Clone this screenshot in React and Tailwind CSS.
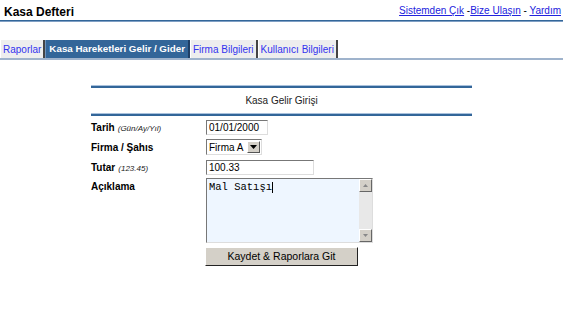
import React from 'react';

const font = { fontFamily: '"Liberation Sans", Arial, sans-serif' };

const Tab = ({ label, active }) => (
  <div
    className={
      active
        ? 'h-[18px] px-[3px] flex items-center bg-[#336699] text-white font-bold text-[9.8px] border-r-2 border-[#1f3f66] border-l border-l-[#6f93bb]'
        : 'h-[18px] px-[2px] flex items-center bg-[#eeeeee] text-[#3333ee] text-[10px] border-r-2 border-[#444] border-l border-l-white'
    }
  >
    {label}
  </div>
);

const Row = ({ label, hint, children }) => (
  <div className="flex items-center h-[20px]">
    <div className="w-[115px] text-[10px] font-bold text-black flex items-baseline gap-[3px]">
      {label}
      {hint && <span className="text-[8px] font-normal italic text-[#222]">{hint}</span>}
    </div>
    {children}
  </div>
);

const inputBox = 'h-[15px] border border-[#777] border-r-[#ddd] border-b-[#ddd] text-[10px] pl-[2px] flex items-center bg-white';

export default function App() {
  return (
    <div className="w-[571px] h-[317px] bg-white overflow-hidden" style={font}>
      {/* header */}
      <div className="flex justify-between items-end h-[20px] px-[4px] pr-[10px]">
        <div className="text-[12px] font-bold text-black leading-none pb-[2px]">Kasa Defteri</div>
        <div className="text-[10px] text-black leading-none pb-[4px]">
          <span className="text-[#2222dd] underline">Sistemden Çık</span> -
          <span className="text-[#2222dd] underline">Bize Ulaşın</span> -{' '}
          <span className="text-[#2222dd] underline">Yardım</span>
        </div>
      </div>
      <div className="mr-[8px] h-[2px] bg-[#336699] border-b border-[#7f9fc4]" />

      {/* tabs */}
      <div className="mt-[18px] flex">
        <Tab label="Raporlar" />
        <Tab label="Kasa Hareketleri Gelir / Gider" active />
        <Tab label="Firma Bilgileri" />
        <Tab label="Kullanıcı Bilgileri" />
      </div>
      <div className="mr-[8px] h-[2px] bg-[#9fb3cc]" />

      {/* form */}
      <div className="ml-[91px] w-[381px] mt-[25px]">
        <div className="h-[3px] bg-[#336699] border-t border-[#a9c1dc]" />
        <div className="h-[25px] flex items-center justify-center text-[10px] text-[#222]">Kasa Gelir Girişi</div>
        <div className="h-[3px] bg-[#336699] border-t border-[#a9c1dc]" />

        <div className="mt-[1px] flex flex-col">
          <Row label="Tarih" hint="(Gün/Ay/Yıl)">
            <div className={`w-[62px] ${inputBox}`}>01/01/2000</div>
          </Row>
          <Row label="Firma / Şahıs">
            <div className="w-[56px] h-[16px] border border-[#777] border-r-[#ddd] border-b-[#ddd] flex items-center bg-white">
              <span className="text-[10px] pl-[2px] flex-1">Firma A</span>
              <div className="w-[13px] h-[12px] bg-[#d4d0c8] border border-white border-r-[#555] border-b-[#555] flex items-center justify-center mr-[1px]">
                <svg width="7" height="4" viewBox="0 0 7 4"><path d="M0 0h7L3.5 4z" fill="#000" /></svg>
              </div>
            </div>
          </Row>
          <Row label="Tutar" hint="(123.45)">
            <div className={`w-[108px] ${inputBox}`}>100.33</div>
          </Row>
          <div className="flex items-start mt-[1px]">
            <div className="w-[115px] text-[10px] font-bold pt-[1px]">Açıklama</div>
            <div className="w-[167px] h-[65px] border border-[#777] border-r-[#ddd] border-b-[#ddd] bg-[#eef6ff] flex">
              <div className="flex-1 pl-[2px] pt-[2px] text-[10.5px] leading-[13px]" style={{ fontFamily: '"Liberation Mono", "Courier New", monospace' }}>
                Mal Satışı<span className="inline-block w-px h-[11px] bg-black align-middle" />
              </div>
              <div className="w-[13px] bg-[#e8e8e8] flex flex-col justify-between">
                <div className="h-[13px] bg-[#d4d0c8] border border-white border-r-[#666] border-b-[#666] flex items-center justify-center">
                  <svg width="5" height="3" viewBox="0 0 5 3"><path d="M0 3h5L2.5 0z" fill="#888" /></svg>
                </div>
                <div className="h-[13px] bg-[#d4d0c8] border border-white border-r-[#666] border-b-[#666] flex items-center justify-center">
                  <svg width="5" height="3" viewBox="0 0 5 3"><path d="M0 0h5L2.5 3z" fill="#888" /></svg>
                </div>
              </div>
            </div>
          </div>
          <div className="ml-[114px] mt-[4px]">
            <div className="w-[153px] h-[19px] bg-[#d4d0c8] border border-white border-r-[#222] border-b-[#222] flex items-center justify-center text-[10.5px] text-black">
              Kaydet &amp; Raporlara Git
            </div>
          </div>
        </div>
      </div>
    </div>
  );
}
